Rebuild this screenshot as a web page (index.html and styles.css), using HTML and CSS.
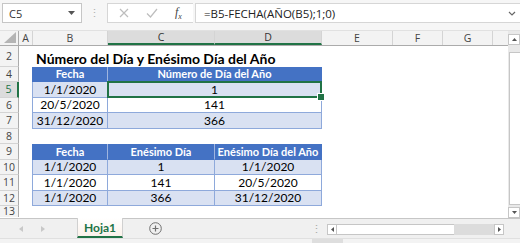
FILE: index.html
```html
<!doctype html>
<html lang="es">
  <head>
    <meta charset="UTF-8" />
    <title>Hoja1</title>
    <link rel="stylesheet" href="styles.css">
  </head>
  <body>
    <div class="app">
      <div class="formula-bar">
        <div class="name-box">
          <span>C5</span>
          <svg class="caret" width="7" height="4" viewBox="0 0 7 4"><path d="M0 0h7L3.5 4z" fill="#555"/></svg>
        </div>
        <div class="grip">⋮</div>
        <div class="fx-buttons">
          <svg width="10" height="10" viewBox="0 0 10 10"><path d="M1 1l8 8M9 1l-8 8" stroke="#bdbdbd" stroke-width="1.2"/></svg>
          <svg width="12" height="10" viewBox="0 0 12 10"><path d="M1 5.5l3.5 3.5L11 1" stroke="#bdbdbd" stroke-width="1.2" fill="none"/></svg>
          <span class="fx">f<sub>x</sub></span>
        </div>
        <div class="formula">
          <span>=B5-FECHA(AÑO(B5);1;0)</span>
          <svg width="8" height="5" viewBox="0 0 8 5"><path d="M1 1l3 3 3-3" stroke="#666" stroke-width="1.2" fill="none"/></svg>
        </div>
      </div>

      <div class="grid-area">
        <div class="sheet">
          <div class="row head-row">
            <div class="rh corner"><svg width="12" height="11" viewBox="0 0 12 11"><path d="M12 0v11H0z" fill="#b4b4b4"/></svg></div>
            <div class="ch ca">A</div>
            <div class="ch cb">B</div>
            <div class="ch cc sel">C</div>
            <div class="ch cd sel">D</div>
            <div class="ch ce">E</div>
            <div class="ch cf">F</div>
            <div class="ch cg">G</div>
            <div class="ch ch-rest"></div>
          </div>

          <div class="row title-row">
            <div class="rh">2</div>
            <div class="ca"></div>
            <div class="title">Número del Día y Enésimo Día del Año</div>
          </div>

          <div class="row">
            <div class="rh">4</div>
            <div class="ca"></div>
            <div class="cell th cb">Fecha</div>
            <div class="cell th cm">Número de Día del Año</div>
          </div>
          <div class="row">
            <div class="rh sel">5</div>
            <div class="ca"></div>
            <div class="cell band cb">1/1/2020</div>
            <div class="cell band cm active">1</div>
          </div>
          <div class="row">
            <div class="rh">6</div>
            <div class="ca"></div>
            <div class="cell cb">20/5/2020</div>
            <div class="cell cm">141</div>
          </div>
          <div class="row">
            <div class="rh">7</div>
            <div class="ca"></div>
            <div class="cell band cb">31/12/2020</div>
            <div class="cell band cm">366</div>
          </div>
          <div class="row">
            <div class="rh">8</div>
          </div>

          <div class="row">
            <div class="rh">9</div>
            <div class="ca"></div>
            <div class="cell th cb">Fecha</div>
            <div class="cell th cc">Enésimo Día</div>
            <div class="cell th cd">Enésimo Día del Año</div>
          </div>
          <div class="row">
            <div class="rh">10</div>
            <div class="ca"></div>
            <div class="cell band cb">1/1/2020</div>
            <div class="cell band cc">1</div>
            <div class="cell band cd">1/1/2020</div>
          </div>
          <div class="row">
            <div class="rh">11</div>
            <div class="ca"></div>
            <div class="cell cb">1/1/2020</div>
            <div class="cell cc">141</div>
            <div class="cell cd">20/5/2020</div>
          </div>
          <div class="row">
            <div class="rh">12</div>
            <div class="ca"></div>
            <div class="cell band cb">1/1/2020</div>
            <div class="cell band cc">366</div>
            <div class="cell band cd">31/12/2020</div>
          </div>
          <div class="row last-row">
            <div class="rh">13</div>
          </div>
        </div>

        <div class="vscroll">
          <div class="sbtn up"><svg width="5" height="3" viewBox="0 0 5 3"><path d="M0 3h5L2.5 0z" fill="#555"/></svg></div>
          <div class="vtrack"><div class="vthumb"></div></div>
          <div class="sbtn down"><svg width="5" height="3" viewBox="0 0 5 3"><path d="M0 0h5L2.5 3z" fill="#555"/></svg></div>
        </div>
      </div>

      <div class="tabs">
        <div class="tab-nav">
          <svg width="4" height="6" viewBox="0 0 4 6"><path d="M4 0v6L0 3z" fill="#c8c8c8"/></svg>
          <svg width="4" height="6" viewBox="0 0 4 6"><path d="M0 0v6l4-3z" fill="#c8c8c8"/></svg>
        </div>
        <div class="tab">Hoja1</div>
        <div class="add-sheet">
          <svg width="13" height="13" viewBox="0 0 13 13"><circle cx="6.5" cy="6.5" r="5.8" fill="none" stroke="#707070"/><path d="M6.5 3.5v6M3.5 6.5h6" stroke="#707070" stroke-width="1.2"/></svg>
        </div>
        <div class="tab-grip">⋮</div>
        <div class="hscroll">
          <div class="hbtn"><svg width="3" height="5" viewBox="0 0 3 5"><path d="M3 0v5L0 2.5z" fill="#555"/></svg></div>
          <div class="hthumb"></div>
          <div class="htrack"></div>
          <div class="hbtn"><svg width="3" height="5" viewBox="0 0 3 5"><path d="M0 0v5l3-2.5z" fill="#555"/></svg></div>
        </div>
      </div>
      <div class="status"><div class="status-mark"></div></div>
    </div>
  </body>
</html>
```

FILE: styles.css
```css
:root {
  --green: #217346;
  --head-bg: #f3f3f3;
  --head-line: #d4d4d4;
  --head-text: #444;
  --blue: #4472c4;
  --band: #d9e1f2;
  --tbl-line: #8ea9db;
}

* {
  margin: 0;
  padding: 0;
  box-sizing: border-box;
}

body {
  width: 520px;
  height: 243px;
  overflow: hidden;
  background: #fff;
  font-family: 'Open Sans', 'Noto Sans', sans-serif;
  color: #000;
}

.app {
  display: flex;
  flex-direction: column;
  height: 243px;
}

/* formula bar */
.formula-bar {
  height: 31px;
  flex: none;
  display: flex;
  align-items: flex-start;
  padding: 3px 0 0 2px;
  background: #f6f6f6;
  border-bottom: 1px solid #e1e1e1;
}

.name-box {
  width: 80px;
  height: 20px;
  background: #fff;
  border: 1px solid #c6c6c6;
  display: flex;
  align-items: center;
  justify-content: space-between;
  padding: 0 6px 0 6px;
  font-size: 11px;
  color: #333;
}

.grip {
  width: 25px;
  text-align: center;
  color: #b0b0b0;
  font-size: 11px;
  line-height: 20px;
}

.fx-buttons {
  width: 86px;
  height: 20px;
  background: #fff;
  border: 1px solid #d6d6d6;
  border-right: none;
  display: flex;
  align-items: center;
  gap: 17px;
  padding-left: 11px;
}

.fx {
  font-family: 'Liberation Serif', serif;
  font-style: italic;
  font-size: 12px;
  color: #444;
}

.fx sub {
  font-size: 8px;
}

.formula {
  flex: 1;
  height: 20px;
  margin-left: 2px;
  background: #fff;
  border: 1px solid #d6d6d6;
  border-right: none;
  display: flex;
  align-items: center;
  justify-content: space-between;
  padding: 0 4px 0 8px;
  font-size: 11.5px;
  color: #222;
}

/* sheet */
.grid-area {
  height: 187px;
  flex: none;
  display: flex;
  overflow: hidden;
}

.sheet {
  flex: 1;
  overflow: hidden;
}

.row {
  display: flex;
  height: 15.5px;
}

.head-row {
  height: 15px;
  background: var(--head-bg);
  border-bottom: 1px solid #ababab;
}

.title-row {
  height: 20.5px;
}

.last-row {
  height: 11px;
}

.rh {
  width: 19px;
  flex: none;
  background: var(--head-bg);
  border-right: 1px solid #ababab;
  border-bottom: 1px solid var(--head-line);
  font-size: 10.5px;
  color: var(--head-text);
  display: flex;
  align-items: center;
  justify-content: center;
}

.last-row .rh {
  align-items: flex-start;
  line-height: 11px;
  border-bottom: none;
}

.rh.sel {
  background: #dcdcdc;
  border-right: 2px solid var(--green);
  color: var(--green);
}

.corner {
  align-items: flex-end;
  justify-content: flex-end;
  padding: 0 2px 2px 0;
  border-bottom: none;
}

.ch {
  border-right: 1px solid var(--head-line);
  font-size: 10.5px;
  color: var(--head-text);
  display: flex;
  align-items: center;
  justify-content: center;
}

.ch.sel {
  background: #dcdcdc;
  border-bottom: 2px solid var(--green);
  color: #333;
}

.ch-rest {
  flex: 1;
  border-right: none;
}

.ca { width: 14px; flex: none; }
.cb { width: 75px; flex: none; }
.cc { width: 107px; flex: none; }
.cd { width: 107px; flex: none; }
.cm { width: 214px; flex: none; }
.ce { width: 71px; flex: none; }
.cf { width: 50px; flex: none; }
.cg { width: 50px; flex: none; }

.title {
  font-family: 'Lato', sans-serif;
  font-weight: 700;
  font-size: 14px;
  padding: 4px 0 0 3px;
  white-space: nowrap;
}

.cell {
  font-family: 'Lato', sans-serif;
  font-size: 12px;
  white-space: nowrap;
  display: flex;
  align-items: center;
  justify-content: center;
  border-bottom: 1px solid var(--tbl-line);
  border-right: 1px solid var(--tbl-line);
}

.cell.cb {
  border-left: 1px solid var(--tbl-line);
  width: 76px;
  margin-left: -1px;
}

.th {
  background: var(--blue);
  color: #fff;
  font-weight: 700;
  font-size: 11px;
  border-right-color: #9fb5df;
  border-bottom-color: var(--blue);
}

.th.cb {
  border-left-color: var(--blue);
}

.th:last-child {
  border-right-color: var(--blue);
}

.band {
  background: var(--band);
}

.active {
  position: relative;
}

.active::after {
  content: '';
  position: absolute;
  top: -1px;
  left: -1px;
  right: -1px;
  bottom: -1px;
  border: 2px solid var(--green);
}

.active::before {
  content: '';
  position: absolute;
  right: -4px;
  bottom: -4px;
  width: 6px;
  height: 6px;
  background: var(--green);
  border: 1px solid #fff;
  z-index: 1;
}

/* vertical scrollbar */
.vscroll {
  width: 12px;
  flex: none;
  background: #e9e9e9;
  display: flex;
  flex-direction: column;
  padding-top: 3px;
}

.sbtn {
  height: 11px;
  flex: none;
  background: #fff;
  border: 1px solid #c6c6c6;
  display: flex;
  align-items: center;
  justify-content: center;
}

.vtrack {
  flex: 1;
  padding: 7px 0 2px 0;
}

.vthumb {
  height: 100%;
  margin-left: 1px;
  background: #fff;
  border: 1px solid #c6c6c6;
  border-right: none;
}

/* sheet tabs */
.tabs {
  height: 20px;
  flex: none;
  display: flex;
  align-items: stretch;
  background: #f0f0f0;
  border-top: 1px solid #c6c6c6;
}

.tab-nav {
  width: 77px;
  display: flex;
  align-items: center;
  gap: 18px;
  padding-left: 19px;
}

.tab {
  width: 46px;
  background: linear-gradient(#fff, #fbf1ea);
  border-bottom: 2px solid var(--green);
  border-left: 1px solid #d0d0d0;
  border-right: 1px solid #d0d0d0;
  margin-top: -1px;
  color: var(--green);
  font-family: 'Lato', sans-serif;
  font-weight: 700;
  font-size: 12px;
  display: flex;
  align-items: center;
  justify-content: center;
}

.add-sheet {
  width: 63px;
  display: flex;
  align-items: center;
  padding-left: 26px;
}

.tab-grip {
  width: 127px;
  padding-left: 125px;
  color: #a8a8a8;
  font-size: 11px;
  line-height: 19px;
}

.hscroll {
  display: flex;
  height: 11px;
  margin-top: 5px;
  margin-left: 14px;
}

.hbtn {
  width: 10px;
  background: #fff;
  border: 1px solid #c6c6c6;
  display: flex;
  align-items: center;
  justify-content: center;
}

.hthumb {
  width: 117px;
  background: #fff;
  border-top: 1px solid #c6c6c6;
  border-bottom: 1px solid #c6c6c6;
}

.htrack {
  width: 40px;
  background: #dcdcdc;
}

.status {
  flex: 1;
  background: #f3f3f3;
  border-top: 1px solid #e0e0e0;
}

.status-mark {
  width: 31px;
  height: 100%;
  margin-left: 312px;
  background: #dedede;
}
```
